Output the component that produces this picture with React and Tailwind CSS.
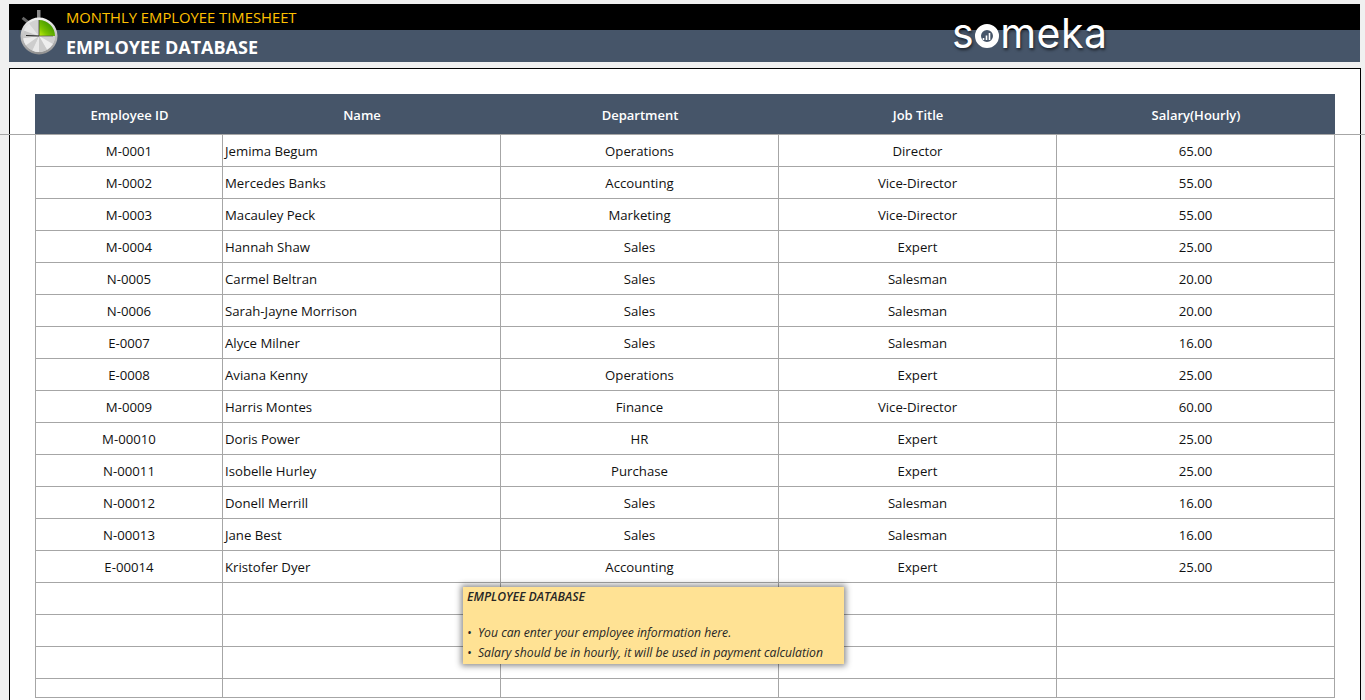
import React from 'react';

const employees = [
  ['M-0001', 'Jemima Begum', 'Operations', 'Director', '65.00'],
  ['M-0002', 'Mercedes Banks', 'Accounting', 'Vice-Director', '55.00'],
  ['M-0003', 'Macauley Peck', 'Marketing', 'Vice-Director', '55.00'],
  ['M-0004', 'Hannah Shaw', 'Sales', 'Expert', '25.00'],
  ['N-0005', 'Carmel Beltran', 'Sales', 'Salesman', '20.00'],
  ['N-0006', 'Sarah-Jayne Morrison', 'Sales', 'Salesman', '20.00'],
  ['E-0007', 'Alyce Milner', 'Sales', 'Salesman', '16.00'],
  ['E-0008', 'Aviana Kenny', 'Operations', 'Expert', '25.00'],
  ['M-0009', 'Harris Montes', 'Finance', 'Vice-Director', '60.00'],
  ['M-00010', 'Doris Power', 'HR', 'Expert', '25.00'],
  ['N-00011', 'Isobelle Hurley', 'Purchase', 'Expert', '25.00'],
  ['N-00012', 'Donell Merrill', 'Sales', 'Salesman', '16.00'],
  ['N-00013', 'Jane Best', 'Sales', 'Salesman', '16.00'],
  ['E-00014', 'Kristofer Dyer', 'Accounting', 'Expert', '25.00'],
  ['', '', '', '', ''],
  ['', '', '', '', ''],
  ['', '', '', '', ''],
  ['', '', '', '', ''],
];

const columns = 'grid grid-cols-[187px_278px_278px_278px_278px]';
const cell = 'flex items-center justify-center border-r border-b border-[#a6a6a6] pt-[3px]';
const headCell = 'flex items-center justify-center pt-[3px]';

// silver spokes on the dial
const spokes = [
  [180, 205, '#e9e9e9'],
  [205, 235, '#cdcdcd'],
  [235, 262, '#ececec'],
  [262, 290, '#c6c6c6'],
  [290, 322, '#e6e6e6'],
  [322, 360, '#d2d2d2'],
  [90, 120, '#d0d0d0'],
  [120, 150, '#eeeeee'],
  [150, 180, '#cacaca'],
];

function wedge(from, to, r) {
  const a = ((from - 90) * Math.PI) / 180;
  const b = ((to - 90) * Math.PI) / 180;
  return `M20 27 L${20 + r * Math.cos(a)} ${27 + r * Math.sin(a)} A${r} ${r} 0 0 1 ${20 + r * Math.cos(b)} ${27 + r * Math.sin(b)} Z`;
}

function Stopwatch() {
  return (
    <svg viewBox="0 0 40 46" className="absolute left-[19px] top-[9px] h-[46px] w-[40px]">
      <defs>
        <linearGradient id="rim" x1="0" y1="0" x2="0" y2="1">
          <stop offset="0" stopColor="#f4f4f4" />
          <stop offset="1" stopColor="#8f8f8f" />
        </linearGradient>
        <linearGradient id="slice" x1="1" y1="0" x2="0" y2="1">
          <stop offset="0" stopColor="#1f7d00" />
          <stop offset="0.7" stopColor="#7cc400" />
          <stop offset="1" stopColor="#c4f010" />
        </linearGradient>
      </defs>
      <rect x="18" y="1" width="3.5" height="8" fill="#8a8a8a" />
      <rect x="3" y="10" width="8" height="3" fill="#666" transform="rotate(38 7 11)" />
      <circle cx="20" cy="27" r="18.5" fill="url(#rim)" />
      <circle cx="20" cy="27" r="16" fill="#d8d8d8" />
      {spokes.map(([from, to, color]) => (
        <path key={from} d={wedge(from, to, 16)} fill={color} />
      ))}
      <path d={wedge(0, 90, 16)} fill="url(#slice)" />
      <path d="M20 27 L7 26.5" stroke="#222" strokeWidth="1.2" />
      <path d="M20 27 L20 11" stroke="#3d3d3d" strokeWidth="0.8" />
      <path d="M20 27 L34 27" stroke="#555" strokeWidth="0.7" />
    </svg>
  );
}

function Logo() {
  return (
    <div className="absolute left-[943px] top-[3px] flex items-baseline font-['Inter',sans-serif] text-[41px] leading-[52px] font-normal tracking-[0.5px] text-white [text-shadow:1px_2px_3px_rgba(0,0,0,0.6)]">
      <span>s</span>
      <svg viewBox="0 0 24 24" className="mx-[1px] h-[24px] w-[24px]">
        <circle cx="12" cy="12" r="9" fill="none" stroke="#fff" strokeWidth="6" />
        <path d="M8.5 16v-2M11.5 16v-4.5M14.5 16V9" stroke="#fff" strokeWidth="1.6" />
      </svg>
      <span>meka</span>
    </div>
  );
}

export default function App() {
  return (
    <div className="relative h-[700px] overflow-hidden bg-[#f0f0f0] font-['Open_Sans',sans-serif] text-[13.2px] text-[#111111]">
      {/* frozen top pane */}
      <div className="h-[135px] border-b border-[#a6a6a6] pt-[4px]">
        <div className="relative ml-[9px] w-[1351px]">
          <div className="flex h-[26px] items-center bg-black pl-[57px] text-[14.8px] text-[#ffc000]">
            MONTHLY EMPLOYEE TIMESHEET
          </div>
          <div className="flex h-[32px] items-center bg-[#465569] pt-[3px] pl-[57px] text-[18px] font-bold text-white">
            EMPLOYEE DATABASE
          </div>
          <Logo />
        </div>
        <Stopwatch />
        <div className="mt-[6px] ml-[9px] h-[66px] w-[1352px] border-x border-t border-black bg-white pt-[25px] pl-[25px]">
          <div className={`${columns} h-[40px] w-[1300px] bg-[#465569] pl-[1px] text-[13px] font-semibold text-white`}>
            <div className={headCell}>Employee ID</div>
            <div className={headCell}>Name</div>
            <div className={headCell}>Department</div>
            <div className={headCell}>Job Title</div>
            <div className={headCell}>Salary(Hourly)</div>
          </div>
        </div>
      </div>

      {/* scrolling pane */}
      <div className="ml-[9px] h-[565px] w-[1352px] border-x border-black bg-white pl-[25px]">
        <div className="w-[1300px] border-l border-[#a6a6a6]">
          {employees.map((row, i) => (
            <div key={i} className={`${columns} ${i === 17 ? 'h-[19px]' : 'h-[32px]'}`}>
              <div className={cell}>{row[0]}</div>
              <div className={`${cell} !justify-start pl-[2px]`}>{row[1]}</div>
              <div className={cell}>{row[2]}</div>
              <div className={cell}>{row[3]}</div>
              <div className={cell}>{row[4]}</div>
            </div>
          ))}
        </div>
      </div>

      <div className="absolute left-[463px] top-[587px] h-[77px] w-[381px] bg-[#ffe294] px-[4px] pt-[1px] text-[12.2px] leading-[18px] italic text-[#262626] shadow-[0_0_6px_2px_rgba(0,0,0,0.45)]">
        <div className="font-semibold">EMPLOYEE DATABASE</div>
        <div className="mt-[18px]">•&nbsp;&nbsp;You can enter your employee information here.</div>
        <div className="mt-[2px]">•&nbsp;&nbsp;Salary should be in hourly, it will be used in payment calculation</div>
      </div>
    </div>
  );
}
